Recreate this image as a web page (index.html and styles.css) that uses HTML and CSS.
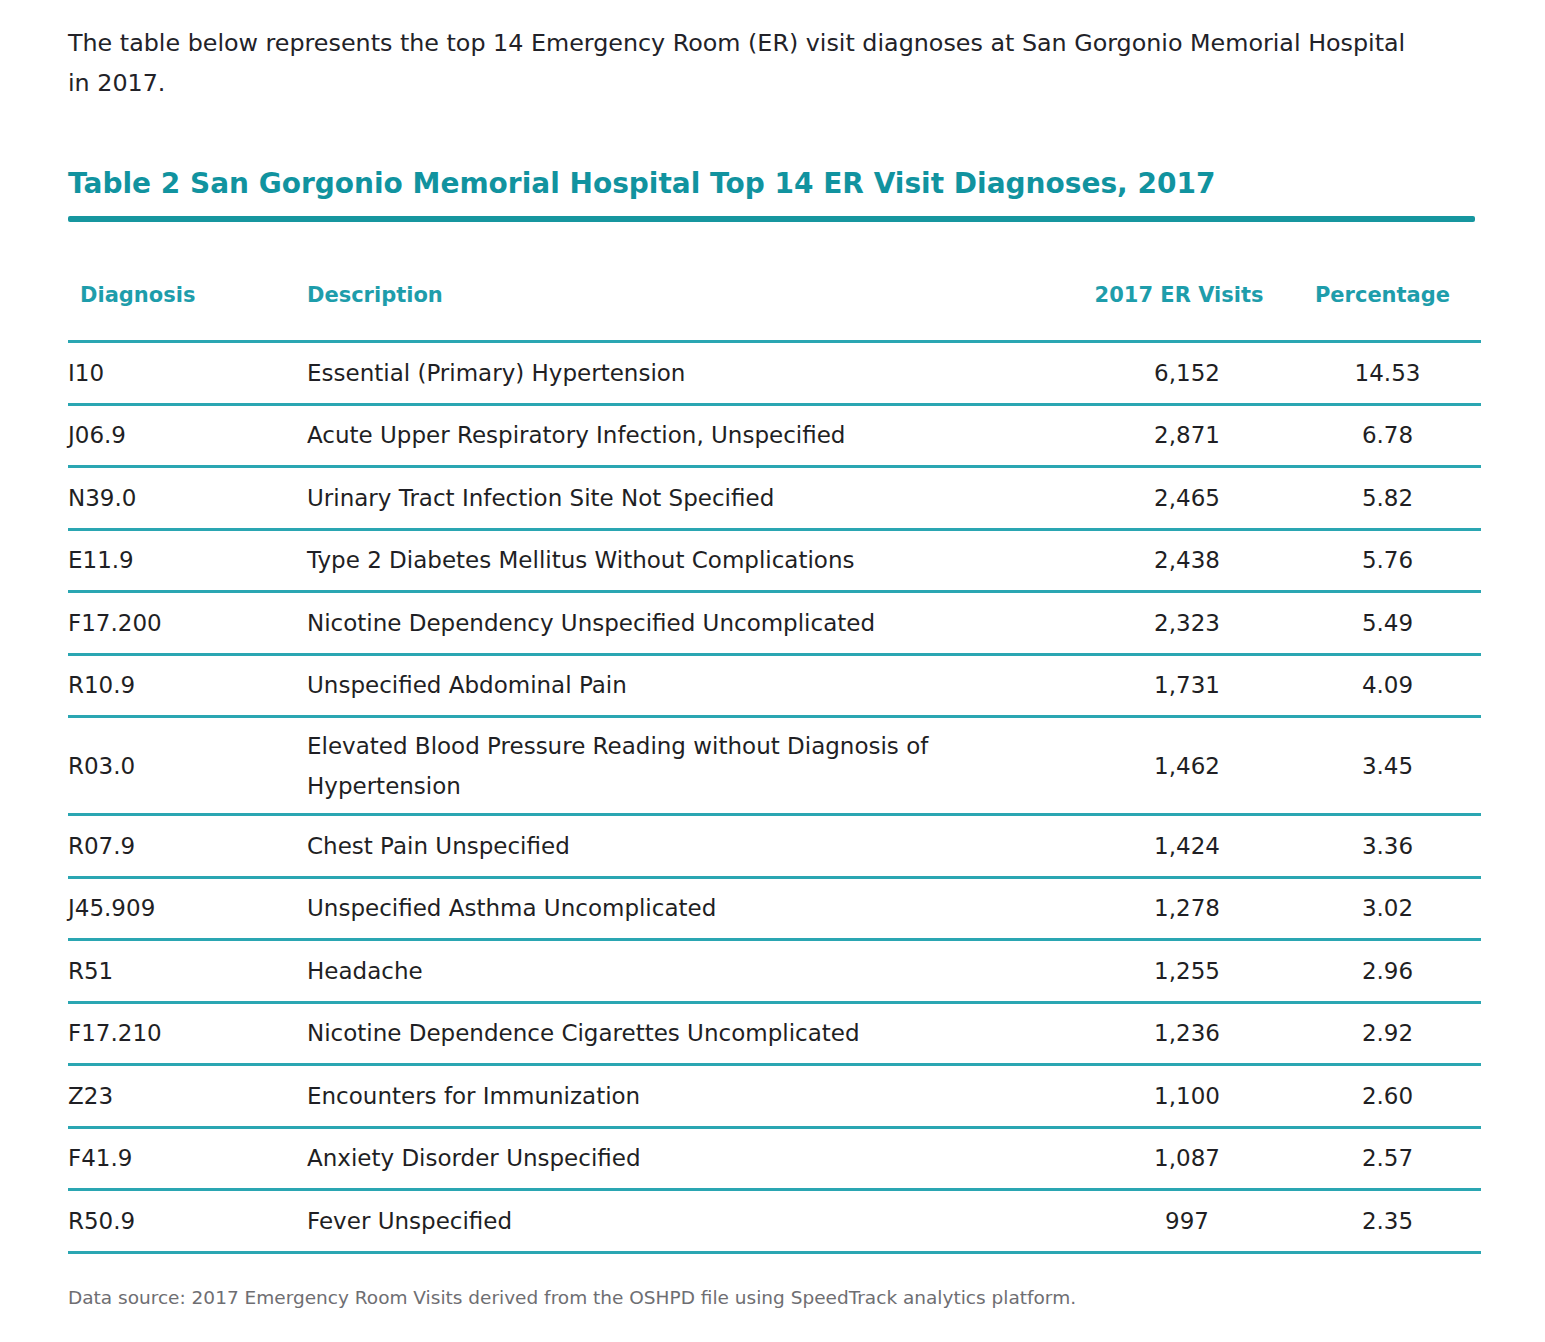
FILE: index.html
```html
<!DOCTYPE html>
<html lang="en">
<head>
<meta charset="utf-8">
<title>Top 14 ER Visit Diagnoses</title>
<link rel="stylesheet" href="styles.css">
</head>
<body>
<div class="page">
  <p class="intro">The table below represents the top 14 Emergency Room (ER) visit diagnoses at San Gorgonio Memorial Hospital in 2017.</p>
  <h2 class="title">Table 2 San Gorgonio Memorial Hospital Top 14 ER Visit Diagnoses, 2017</h2>
  <div class="title-bar"></div>
  <table class="dx">
    <thead>
      <tr>
        <th class="c-code">Diagnosis</th>
        <th class="c-desc">Description</th>
        <th class="c-num">2017 ER Visits</th>
        <th class="c-pct">Percentage</th>
      </tr>
    </thead>
    <tbody>
      <tr><td class="c-code">I10</td><td class="c-desc">Essential (Primary) Hypertension</td><td class="c-num">6,152</td><td class="c-pct">14.53</td></tr>
      <tr><td class="c-code">J06.9</td><td class="c-desc">Acute Upper Respiratory Infection, Unspecified</td><td class="c-num">2,871</td><td class="c-pct">6.78</td></tr>
      <tr><td class="c-code">N39.0</td><td class="c-desc">Urinary Tract Infection Site Not Specified</td><td class="c-num">2,465</td><td class="c-pct">5.82</td></tr>
      <tr><td class="c-code">E11.9</td><td class="c-desc">Type 2 Diabetes Mellitus Without Complications</td><td class="c-num">2,438</td><td class="c-pct">5.76</td></tr>
      <tr><td class="c-code">F17.200</td><td class="c-desc">Nicotine Dependency Unspecified Uncomplicated</td><td class="c-num">2,323</td><td class="c-pct">5.49</td></tr>
      <tr><td class="c-code">R10.9</td><td class="c-desc">Unspecified Abdominal Pain</td><td class="c-num">1,731</td><td class="c-pct">4.09</td></tr>
      <tr class="tall"><td class="c-code">R03.0</td><td class="c-desc">Elevated Blood Pressure Reading without Diagnosis of<br>Hypertension</td><td class="c-num">1,462</td><td class="c-pct">3.45</td></tr>
      <tr><td class="c-code">R07.9</td><td class="c-desc">Chest Pain Unspecified</td><td class="c-num">1,424</td><td class="c-pct">3.36</td></tr>
      <tr><td class="c-code">J45.909</td><td class="c-desc">Unspecified Asthma Uncomplicated</td><td class="c-num">1,278</td><td class="c-pct">3.02</td></tr>
      <tr><td class="c-code">R51</td><td class="c-desc">Headache</td><td class="c-num">1,255</td><td class="c-pct">2.96</td></tr>
      <tr><td class="c-code">F17.210</td><td class="c-desc">Nicotine Dependence Cigarettes Uncomplicated</td><td class="c-num">1,236</td><td class="c-pct">2.92</td></tr>
      <tr><td class="c-code">Z23</td><td class="c-desc">Encounters for Immunization</td><td class="c-num">1,100</td><td class="c-pct">2.60</td></tr>
      <tr><td class="c-code">F41.9</td><td class="c-desc">Anxiety Disorder Unspecified</td><td class="c-num">1,087</td><td class="c-pct">2.57</td></tr>
      <tr><td class="c-code">R50.9</td><td class="c-desc">Fever Unspecified</td><td class="c-num">997</td><td class="c-pct">2.35</td></tr>
    </tbody>
  </table>
  <p class="source">Data source: 2017 Emergency Room Visits derived from the OSHPD file using SpeedTrack analytics platform.</p>
</div>
</body>
</html>
```

FILE: styles.css
```css
html, body {
  margin: 0;
  padding: 0;
  background: #ffffff;
}

body {
  font-family: "DejaVu Sans", "Liberation Sans", sans-serif;
  color: #1f1f24;
}

.page {
  padding: 23px 0 0 68px;
  width: 1413px;
}

.intro {
  margin: 0;
  width: 1352px;
  font-size: 23.8px;
  line-height: 40px;
  color: #222228;
}

.title {
  margin: 61px 0 0 0;
  font-size: 28px;
  line-height: 40px;
  font-weight: bold;
  color: #11939f;
}

.title-bar {
  margin-top: 12px;
  width: 1407px;
  height: 6px;
  background: #16969f;
  border-radius: 2px;
}

.dx {
  margin-top: 28px;
  width: 1413px;
  border-collapse: separate;
  border-spacing: 0;
  table-layout: fixed;
}

.dx th,
.dx td {
  box-sizing: border-box;
  padding: 0;
  border-bottom: 3px solid #2aa6b2;
  vertical-align: middle;
}

.dx th {
  font-size: 21px;
  font-weight: bold;
  color: #1e9dab;
  height: 93px;
}

.dx td {
  font-size: 23px;
  height: 62.5px;
  color: #1f1f24;
}

.dx tr.tall td {
  height: 98px;
  line-height: 40px;
}

.dx .c-code { width: 227px; text-align: left; }
.dx .c-desc { width: 795px; text-align: left; padding-left: 12px; }
.dx .c-num { width: 194px; text-align: center; }
.dx .c-pct { width: 197px; text-align: center; }

.dx th.c-code { padding-left: 12px; }
.dx th.c-num { padding-right: 16px; }
.dx td.c-pct { padding-left: 10px; }

.source {
  margin: 33px 0 0 0;
  font-size: 18.5px;
  color: #6e6e72;
}
```
